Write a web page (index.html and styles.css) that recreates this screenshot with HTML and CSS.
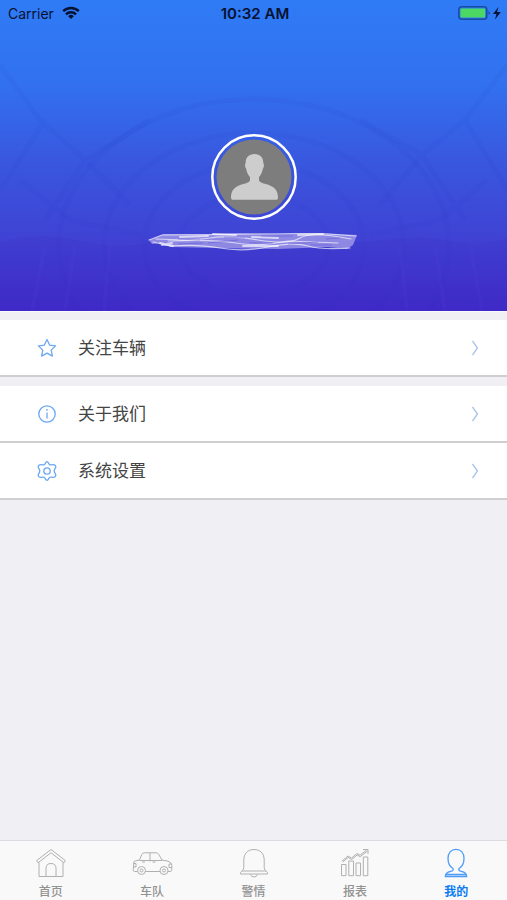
FILE: index.html
```html
<!DOCTYPE html>
<html lang="zh-CN">
<head>
<meta charset="utf-8">
<meta name="viewport" content="width=device-width, initial-scale=1">
<title>我的</title>
<link rel="stylesheet" href="styles.css">
</head>
<body>
<div class="app">
  <header class="hero">
    <svg class="hero-art" viewBox="0 0 507 311" preserveAspectRatio="xMidYMid slice" aria-hidden="true">
      <g fill="none" stroke="#2630b8" stroke-opacity=".06" stroke-width="5">
        <ellipse cx="254" cy="245" rx="75" ry="50"/>
        <ellipse cx="254" cy="245" rx="110" ry="82"/>
        <ellipse cx="254" cy="245" rx="150" ry="112"/>
        <ellipse cx="254" cy="245" rx="195" ry="146"/>
        <path d="M0 65 40 120 85 160 130 205M0 190 45 120M45 220 85 160 150 120M507 65 465 120 422 155 380 205M507 190 465 120M465 220 422 155 360 120M20 180 70 220 140 235M487 180 440 220 370 235"/>
      </g>
      <path d="M0 242Q40 232 80 241T150 242H370Q420 234 450 241T507 238V311H0Z" fill="#3a22b8" fill-opacity=".1"/>
      <g fill="none" stroke="#6050e0" stroke-opacity=".09" stroke-width="4">
        <path d="M45 245 32 311M75 245 65 311M435 245 445 311M470 245 482 311M110 245 104 311M400 245 407 311"/>
      </g>
    </svg>
    <div class="status">
      <span class="carrier">Carrier
        <svg width="18" height="14" viewBox="0 0 18 14" aria-hidden="true"><g fill="none" stroke="#061232" stroke-width="2.4"><path d="M1.2 5.2a11 11 0 0 1 15.6 0"/><path d="M4 8.300a7 7 0 0 1 10 0"/></g><path d="M9 13 6.200 10.200a4 4 0 0 1 5.600 0Z" fill="#061232"/></svg>
      </span>
      <span class="time">10:32 AM</span>
      <svg class="battery" width="44" height="14" viewBox="0 0 44 14" aria-hidden="true"><rect x=".8" y=".8" width="28" height="12.400" rx="3" fill="none" stroke="#174da0" stroke-width="1.500"/><rect x="2.500" y="2.500" width="24.600" height="9" rx="1" fill="#4bd964"/><path d="M30.500 5v4q3-2 0-4Z" fill="#174da0"/><path d="M40.500 1 35 8h3.500L37 13.500 42.800 6H39Z" fill="#061232"/></svg>
    </div>
    <div class="profile">
      <svg class="avatar" viewBox="0 0 86 86" role="img" aria-label="头像"><circle cx="43" cy="43" r="41.700" fill="none" stroke="#fff" stroke-width="2.500"/><circle cx="43" cy="43" r="37.500" fill="#7d7d7d"/><path d="M43.500 20c6 0 9 4 8.800 9 1 1 .8 4-.4 5.500-.6 4-2.200 6.500-3.900 8.500v3.500c1.500 3 6.500 3 11 5 5.500 2.300 7.800 6 8 11.500 0 2-.6 2.800-2 2.800H22c-1.400 0-2-.8-2-2.800.2-5.500 2.500-9.200 8-11.500 4.500-2 9.500-2 11-5V43c-1.700-2-3.300-4.500-3.900-8.500-1.200-1.500-1.400-4.500-.4-5.500-.2-5 2.800-9 8.800-9Z" fill="#cdcdcd"/></svg>
      <svg class="scribble" viewBox="0 0 212 20" aria-hidden="true">
        <path d="M1 9 16 3 60 3 90 2 130 3 170 2 209 4 205 14 199 18 180 16 130 18 70 17 23 16 12 12 4 13Z" fill="#a9a2ea" fill-opacity=".75"/>
        <g fill="none" stroke="#fff" stroke-linecap="round" stroke-opacity=".65" stroke-width="1.200">
          <path d="M1 9 14 4Q60 4 108 3T180 3L208 5"/>
          <path d="M8 8Q45 10 62 7T110 9 152 7 203 8"/>
          <path d="M5 11 22 15Q50 13 72 17T120 16 160 15 202 17"/>
          <path d="M20 10Q65 8 88 12T140 10L190 12"/>
          <path d="M12 12 25 15M14 14 24 12M65 3 88 4M95 15 130 15M150 4 175 3M32 6 60 5M104 6 130 7" stroke-width="2"/>
        </g>
        <g fill="none" stroke="#5b4dd0" stroke-opacity=".5" stroke-width=".9">
          <path d="M30 8 52 9M60 12 90 9M76 6 97 7M30 13 55 12M101 12 125 12M113 5 145 5M140 13 170 11M162 14 184 14M178 8 192 7"/>
        </g>
      </svg>
    </div>
  </header>

  <main class="menu">
    <div class="group">
      <a class="row" href="#follow">
        <svg class="row-icon" viewBox="0 0 20 20" aria-hidden="true"><path d="m10 1.500 2.600 5.600 6 .8-4.400 4.200 1.200 6-5.400-3-5.400 3 1.200-6L1.400 7.900l6-.8Z"/></svg>
        <span class="row-label">关注车辆</span>
        <svg class="chevron" viewBox="0 0 8 16" aria-hidden="true"><path d="M1.500 1 6.500 8 1.500 15"/></svg>
      </a>
    </div>
    <div class="group">
      <a class="row" href="#about">
        <svg class="row-icon" viewBox="0 0 20 20" aria-hidden="true"><circle cx="10" cy="10" r="8.200"/><path d="M10 8.500v6M10 5v1.800"/></svg>
        <span class="row-label">关于我们</span>
        <svg class="chevron" viewBox="0 0 8 16" aria-hidden="true"><path d="M1.500 1 6.500 8 1.500 15"/></svg>
      </a>
      <a class="row" href="#settings">
        <svg class="row-icon" viewBox="0 0 20 20" aria-hidden="true"><path d="M10 .7Q11.200 1 11.800 2.600 12.600 4.200 14.500 3.900 17 3.400 18 4.200 19.500 5.500 18.200 7.400 16.300 10 18.200 12.600 19.500 14.500 18 15.800 17 16.600 14.500 16.100 12.600 15.800 11.800 17.400 11.200 19 10 19.300 8.800 19 8.200 17.400 7.400 15.800 5.500 16.100 3 16.600 2 15.800.5 14.500 1.800 12.600 3.700 10 1.800 7.400.5 5.500 2 4.200 3 3.400 5.500 3.900 7.400 4.200 8.200 2.600 8.800 1 10 .7Z"/><circle cx="10" cy="10" r="3.200"/></svg>
        <span class="row-label">系统设置</span>
        <svg class="chevron" viewBox="0 0 8 16" aria-hidden="true"><path d="M1.500 1 6.500 8 1.500 15"/></svg>
      </a>
    </div>
  </main>

  <nav class="tabs">
    <a class="tab" href="#home">
      <svg width="30" height="30" viewBox="0 0 30 30" aria-hidden="true"><path d="M15 1.500 29.300 12.500 28 14.800 15 4.800 2 14.800.7 12.500ZM3 14.500V28.500h24v-14M10 28.500V20.500q0-5 5-5t5 5v8"/></svg>
      <span>首页</span>
    </a>
    <a class="tab" href="#fleet">
      <svg width="42" height="30" viewBox="0 0 42 30" aria-hidden="true"><path d="M6.500 23.500H3.500q-1.500 0-1.200-2L2.800 14Q3 13 5 12.800L8.500 12 10.800 6.500Q11.500 4.800 13.500 4.800H25q1.800 0 2.800 1.700L31 12q6 .8 8 2.200 1.800 1 1.800 3v4.300q0 1.800-1.800 2h-2M14.500 23.500H29M8.500 12.500H31M19 5v8.500M11 14h3M21.500 14h3M2.500 15.500H5v3.500H2.300M40.500 16H38v3.500h3"/><circle cx="10.500" cy="22.500" r="4"/><circle cx="33" cy="22.500" r="4"/><circle cx="10.500" cy="22.500" r="1.500"/><circle cx="33" cy="22.500" r="1.500"/></svg>
      <span>车队</span>
    </a>
    <a class="tab" href="#alerts">
      <svg width="30" height="30" viewBox="0 0 30 30" aria-hidden="true"><path d="M15 1.500C8.500 1.500 4.800 6 4.800 12v7.500q0 2.500-2.500 4-1.300 1-.8 2.500h27q.5-1.500-.8-2.500-2.500-1.500-2.500-4V12c0-6-3.700-10.500-10.200-10.500ZM3 23H27M11.500 26.500q.8 2.500 3.500 2.500t3.500-2.500"/></svg>
      <span>警情</span>
    </a>
    <a class="tab" href="#reports">
      <svg width="30" height="30" viewBox="0 0 30 30" aria-hidden="true"><path d="M1.500 16.500h4.500v11.200H1.500ZM8.800 13h4.700v14.700H8.800ZM16 15h4.500v12.700H16ZM23.300 9h4.500v18.700h-4.500ZM2 13 8 8l3.500 2L17 5.500l3 1.700L26.500 2M23 1.500h5V6M2.500 14 8.200 9.500l3.500 2L17.200 7l3 1.700L27.500 3"/></svg>
      <span>报表</span>
    </a>
    <a class="tab tab-active" href="#me" aria-current="page">
      <svg width="30" height="30" viewBox="0 0 30 30" aria-hidden="true"><path d="M12 20.500C8.500 18.500 7 15 7 10.500 7 5 10 1.300 15 1.300s8 3.700 8 9.200c0 4.500-1.500 8-5 10-.5 1.500 0 2.200 1.500 2.700 3.500 1 6 1.300 6.300 5.300H4.200c.3-4 2.800-4.300 6.300-5.300 1.500-.5 2-1.200 1.500-2.700ZM4.500 26.500H25.500"/></svg>
      <span>我的</span>
    </a>
  </nav>
</div>
</body>
</html>
```
FILE: styles.css
```css
* {
  box-sizing: border-box;
}

body {
  margin: 0;
  background: #efeff4;
  font-family: Inter, "Noto Sans CJK SC", sans-serif;
}

a {
  color: inherit;
  text-decoration: none;
}

svg {
  display: block;
  flex: none;
}

.app {
  min-height: 100vh;
  display: flex;
  flex-direction: column;
}

.hero {
  position: relative;
  padding-bottom: 60px;
  background: linear-gradient(#2f7bf6 0%, #3270ee 28%, #3957df 52%, #4041d3 78%, #402bc8 100%);
  border-bottom: 1px solid #f8f8ff;
}

.hero-art {
  position: absolute;
  inset: 0;
  width: 100%;
  height: 100%;
}

.status {
  position: relative;
  display: grid;
  grid-template-columns: 1fr auto 1fr;
  align-items: center;
  height: 26px;
  padding: 0 5px 0 8px;
  color: #061232;
  font-size: 14px;
}

.carrier {
  display: flex;
  align-items: center;
  gap: 8px;
}

.time {
  font-size: 15px;
  font-weight: 600;
}

.battery {
  justify-self: end;
}

.profile {
  position: relative;
  display: flex;
  flex-direction: column;
  align-items: center;
  gap: 11px;
  padding-top: 108px;
}

.avatar {
  width: 86px;
  height: 86px;
}

.scribble {
  width: 212px;
  height: 20px;
}

.menu {
  flex: 1;
  padding-top: 8px;
}

.group {
  margin-bottom: 9px;
}

.row {
  display: flex;
  align-items: center;
  height: 57px;
  padding: 0 28px 0 37px;
  background: #fff;
  border-bottom: 2px solid #cfcfd2;
}

.row-icon {
  width: 20px;
  height: 20px;
  fill: none;
  stroke: #6ba8f2;
  stroke-width: 1.3;
  stroke-linejoin: round;
}

.row-label {
  flex: 1;
  margin-left: 21px;
  color: #444;
  font-size: 17px;
  line-height: 24px;
}

.chevron {
  width: 8px;
  height: 16px;
  fill: none;
  stroke: #a9c3ea;
  stroke-width: 1.3;
}

.tabs {
  display: flex;
  height: 60px;
  padding-top: 7px;
  background: #f9f9f9;
  border-top: 1px solid #dcdce2;
}

.tab {
  flex: 1;
  display: flex;
  flex-direction: column;
  align-items: center;
  gap: 6px;
  color: #929292;
  font-size: 12px;
  font-weight: 500;
  line-height: 16px;
}

.tab svg {
  fill: none;
  stroke: #b0b0b0;
  stroke-width: 1;
  stroke-linejoin: round;
}

.tab-active {
  color: #0c7cf5;
  font-weight: 700;
}

.tab-active svg {
  stroke: #4b9bf7;
  stroke-width: 1.3;
}
```
